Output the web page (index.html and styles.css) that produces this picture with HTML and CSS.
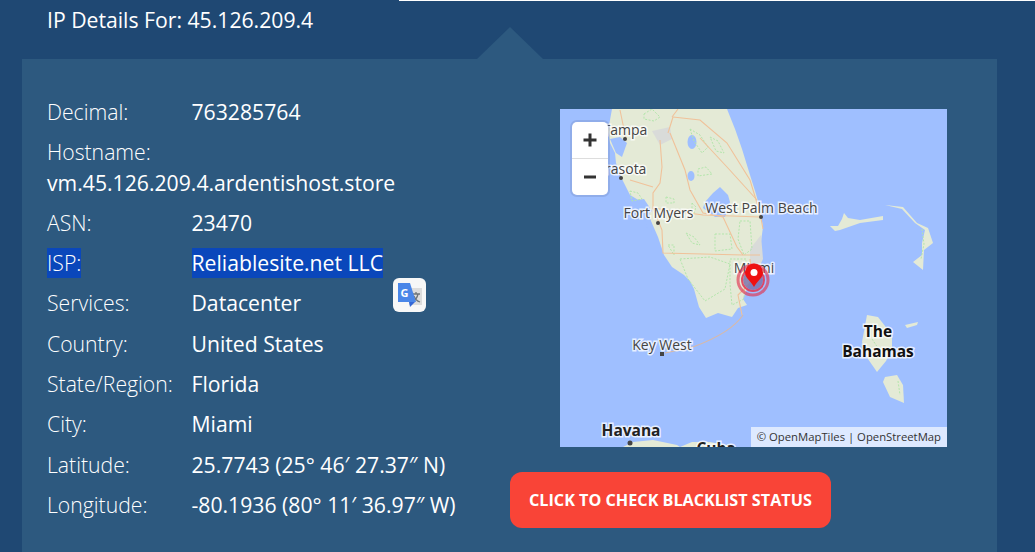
FILE: index.html
```html
<!DOCTYPE html>
<html lang="en">
<head>
  <meta charset="UTF-8">
  <meta name="viewport" content="width=device-width, initial-scale=1.0">
  <title>IP Details</title>
  <link rel="stylesheet" href="styles.css">
</head>
<body>

<div class="top-sliver"></div>

<h2 class="page-title">IP Details For: 45.126.209.4</h2>

<div class="card">
  <ul class="details">
    <li><span class="label">Decimal:</span>763285764</li>
    <li><span class="label">Hostname:</span> vm.45.126.209.4.ardentishost.store</li>
    <li><span class="label">ASN:</span>23470</li>
    <li><span class="label"><span class="picked">ISP:</span></span><span class="picked">Reliablesite.net LLC</span></li>
    <li><span class="label">Services:</span>Datacenter</li>
    <li><span class="label">Country:</span>United States</li>
    <li><span class="label">State/Region:</span>Florida</li>
    <li><span class="label">City:</span>Miami</li>
    <li><span class="label">Latitude:</span>25.7743 (25° 46′ 27.37″ N)</li>
    <li><span class="label">Longitude:</span>-80.1936 (80° 11′ 36.97″ W)</li>
  </ul>

  <div class="side">
    <div class="map">
      <svg class="map-art" viewBox="0 0 387 338" width="387" height="338">
        <g class="tiles">
          <!-- land -->
          <path class="land" d="M52,0 L50,11 48,22 50,34 55,44 56,54 62,70 70,86 80,92 87,98 91,112 98,128 104,146 112,158 124,166 130,172 134,180 139,198 146,209 158,204 172,208 178,199 187,196 183,190 190,172 196,160 200,140 203,118 200,100 196,85 190,66 182,40 175,20 167,0 Z"/>
          <path class="land" d="M265,112 L275,122 280,121 300,114 323,111 323,107 300,111 288,109 284,104 282,110 278,117 270,117 Z"/>
          <path class="land" d="M325,96 L343,98 357,114 368,119 373,134 364,141 363,161 353,153 362,146 362,134 365,121 355,114 342,100 Z"/>
          <path class="land" d="M307,206 L318,208 332,226 332,240 326,252 317,263 308,250 302,233 Z"/>
          <path class="land" d="M325,268 L337,266 343,276 344,294 330,288 323,273 Z"/>
          <path class="land" d="M345,216 L358,213 357,216 347,219 Z"/>
          <path class="land" d="M63,338 L73,333 93,331 117,336 120,338 Z"/>
          <path class="land" d="M120,338 L132,333 150,333 175,338 Z"/>
          <!-- water on land -->
          <path class="water" d="M145,93 L153,84 160,78 168,86 170,93 165,108 155,108 143,99 Z"/>
          <ellipse class="water" cx="132" cy="33" rx="4.500" ry="7"/>
          <ellipse class="water" cx="131" cy="67" rx="3.500" ry="5"/>
          <path class="water" d="M50,30 L60,28 67,34 62,48 56,44 Z"/>
          <path class="water" d="M76,91 L84,90 92,102 88,106 Z"/>
          <path class="water" d="M84,108 L91,112 92,124 88,122 Z"/>
          <!-- built up -->
          <path class="urban" d="M190,140 L201,126 203,150 196,165 190,160 Z"/>
          <path class="urban" d="M92,22 L110,18 112,30 100,36 Z"/>
          <!-- parks -->
          <path class="park" d="M84,5 L92,0 100,8 94,12 84,10 Z"/>
          <path class="park" d="M130,20 L140,26 148,38 142,44 134,32 Z"/>
          <path class="park" d="M150,28 L158,32 164,44 156,42 Z"/>
          <path class="park" d="M138,60 L146,58 152,65 138,67 Z"/>
          <path class="park" d="M70,82 L78,84 82,90 72,92 Z"/>
          <path class="park" d="M106,88 L114,90 114,94 106,94 Z"/>
          <path class="park" d="M132,94 L136,98 134,104 132,102 Z"/>
          <path class="park" d="M126,124 L134,128 140,136 132,134 Z"/>
          <path class="park" d="M108,136 L114,136 114,146 Z"/>
          <path class="park" d="M155,125 L170,125 172,140 155,142 Z"/>
          <path class="park" d="M180,112 L190,112 192,140 184,146 178,130 Z"/>
          <path class="park" d="M120,150 L150,148 170,155 165,180 145,192 128,170 Z"/>
          <path class="park" d="M170,150 L186,150 184,190 172,196 170,175 Z"/>
          <path class="park" d="M362,120 L364,135 361,150 M312,230 L322,245 M338,272 L340,286"/>
          <!-- roads -->
          <path class="road" d="M113,8 L140,11 167,34 190,71 200,104 203,120"/>
          <path class="road" d="M110,24 L125,61 130,81 143,104 163,108 177,138 183,146"/>
          <path class="road" d="M100,31 L102,58 100,74 93,84 93,99 143,106 200,108"/>
          <path class="road" d="M93,99 L102,121 103,144 183,146 200,146"/>
          <path class="road" d="M140,29 L167,58 197,91"/>
          <path class="road" d="M60,1 L66,30 M70,71 L93,78 M112,8 L118,0 M113,8 L108,24"/>
          <path class="road" d="M190,150 L192,172 178,186 182,206"/>
          <path class="road thin" d="M183,206 C175,218 160,228 133,238 L105,244"/>
        </g>
        <!-- labels -->
        <text class="place" x="65" y="26" text-anchor="middle">Tampa</text>
        <text class="place" x="58" y="65" text-anchor="middle">Sarasota</text>
        <text class="place" x="98.500" y="109" text-anchor="middle">Fort Myers</text>
        <text class="place" x="201.500" y="104" text-anchor="middle">West Palm Beach</text>
        <text class="place" x="194" y="164" text-anchor="middle">Miami</text>
        <text class="place" x="102" y="241" text-anchor="middle">Key West</text>
        <text class="place big" x="71" y="327" text-anchor="middle">Havana</text>
        <text class="place big" x="156" y="345" text-anchor="middle">Cuba</text>
        <text class="place big dark" x="318" y="228" text-anchor="middle">The</text>
        <text class="place big dark" x="318" y="248" text-anchor="middle">Bahamas</text>
        <circle class="dot" cx="65" cy="30" r="2"/>
        <circle class="dot" cx="61" cy="69" r="2"/>
        <circle class="dot" cx="98" cy="114" r="2"/>
        <circle class="dot" cx="201" cy="108" r="2"/>
        <rect class="dot" x="100" y="243" width="4" height="4"/>
        <circle class="dot" cx="70" cy="334" r="2.500"/>
        <!-- marker -->
        <circle class="pulse-core" cx="193" cy="171" r="10"/>
        <circle class="pulse-ring" cx="193" cy="171" r="15"/>
        <circle class="pulse-ring inner" cx="193" cy="171" r="11"/>
        <path class="pin" d="M194,178 C191,172 185,169 185,163.500 A9,9 0 0 1 203,163.500 C203,169 197,172 194,178 Z"/>
        <circle class="pin-hole" cx="194" cy="163.500" r="3.500"/>
      </svg>

      <div class="zoom-box">
        <div class="zoom-btn"><svg viewBox="0 0 16 16" width="16" height="16"><path class="zoom-mark" d="M8,1.500 V14.500 M1.500,8 H14.500"/></svg></div>
        <div class="zoom-btn"><svg viewBox="0 0 16 16" width="16" height="16"><path class="zoom-mark" d="M2,8 H14"/></svg></div>
      </div>

      <div class="attribution">© OpenMapTiles | OpenStreetMap</div>
    </div>

    <a class="check-btn" href="#">CLICK TO CHECK BLACKLIST STATUS</a>
  </div>

  <div class="translate-pop">
    <svg viewBox="0 0 26 26" width="26" height="26">
      <rect x="12" y="6" width="13" height="17" fill="#dcdcdc"/>
      <path d="M15,12 H23 M19,10 V12 M21,12 C20,17 17,19 15,20 M17,14 C18,17 20,19 23,20" stroke="#6d7478" stroke-width="1.300" fill="none"/>
      <path d="M1,1 H13 L19,20 H1 Z" fill="#4a86e8"/>
      <path d="M12,20 H18 L13,25 Z" fill="#3367d6"/>
      <text class="translate-g" x="7.500" y="15" text-anchor="middle">G</text>
    </svg>
  </div>
</div>

</body>
</html>
```

FILE: styles.css
```css
html, body {
  height: 100%;
}

body {
  font-family: 'Open Sans', sans-serif;
  background-color: #1f4873;
  color: white;
  margin: 0;
  overflow: hidden;
  display: flex;
  flex-direction: column;
}

.top-sliver {
  position: absolute;
  top: 0;
  left: 399px;
  right: 0;
  height: 1px;
  background: white;
}

.page-title {
  margin: 0;
  padding: 5px 47px 24px;
  font-size: 21.200px;
  font-weight: 400;
  line-height: 30px;
}

.card {
  position: relative;
  flex: 1;
  margin: 0 38px 0 22px;
  padding: 38px 25px 0;
  background: #2d597f;
  display: flex;
}

.card::before {
  content: "";
  position: absolute;
  top: -32px;
  left: 455px;
  width: 66px;
  height: 32px;
  background: #2d597f;
  clip-path: polygon(50% 0, 100% 100%, 0 100%);
}

.details {
  list-style: none;
  margin: 0;
  padding: 0;
  width: 463px;
  flex-shrink: 0;
  font-size: 21.200px;
  font-weight: 400;
  line-height: 30.300px;
}

.details li {
  margin-bottom: 10px;
}

.label {
  display: inline-block;
  width: 144.500px;
  font-weight: 300;
}

.picked {
  display: inline-block;
  background: #0a47bb;
  line-height: 30px;
}

.side {
  display: flex;
  flex-direction: column;
  align-items: flex-start;
  margin-top: 12px;
}

.map {
  position: relative;
  width: 387px;
  height: 338px;
  margin-left: 50px;
  background: #9fbfff;
  overflow: hidden;
}

.map-art {
  display: block;
}

.tiles {
  filter: blur(0.4px);
}

.land {
  fill: #e4ead6;
}

.water {
  fill: #9fbfff;
}

.urban {
  fill: #d9dbd9;
}

.park {
  fill: none;
  stroke: #b3e6ab;
  stroke-width: 1;
  stroke-dasharray: 2 1.500;
}

.road {
  fill: none;
  stroke: #f0c29a;
  stroke-width: 1.100;
}

.road.thin {
  stroke: #d9b9a6;
}

.place {
  font-family: 'Open Sans', sans-serif;
  font-size: 14px;
  fill: #444;
  stroke: rgba(255, 255, 255, 0.75);
  stroke-width: 3px;
  paint-order: stroke;
}

.place.big {
  font-size: 15.500px;
  font-weight: 700;
  fill: #222;
}

.place.dark {
  fill: #111;
}

.dot {
  fill: #444;
}

.pulse-core {
  fill: rgba(120, 110, 170, 0.8);
}

.pulse-ring {
  fill: none;
  stroke: rgba(226, 50, 80, 0.65);
  stroke-width: 3;
}

.pulse-ring.inner {
  stroke: rgba(226, 50, 80, 0.85);
  stroke-width: 2;
}

.pin {
  fill: #ee1111;
}

.pin-hole {
  fill: white;
}

.zoom-box {
  position: absolute;
  top: 13px;
  left: 12px;
  width: 36px;
  background: white;
  border-radius: 5px;
  box-shadow: 0 0 0 2px rgba(100, 120, 170, 0.25);
}

.zoom-btn {
  height: 36px;
  display: flex;
  align-items: center;
  justify-content: center;
}

.zoom-btn + .zoom-btn {
  border-top: 1px solid #ddd;
}

.zoom-mark {
  fill: none;
  stroke: #333;
  stroke-width: 3;
}

.attribution {
  position: absolute;
  right: 0;
  bottom: 0;
  padding: 0 6px;
  height: 20px;
  line-height: 20px;
  font-size: 11.300px;
  color: #333;
  background: rgba(255, 255, 255, 0.65);
}

.check-btn {
  margin-top: 25px;
  padding: 0 19px;
  height: 56px;
  line-height: 56px;
  background: #f94437;
  border-radius: 12px;
  color: white;
  font-size: 16.200px;
  font-weight: 700;
  text-decoration: none;
}

.translate-pop {
  position: absolute;
  top: 219px;
  left: 371px;
  width: 33px;
  height: 34px;
  background: #f7f7f7;
  border-radius: 6px;
  display: flex;
  align-items: center;
  justify-content: center;
}

.translate-g {
  font-family: 'Open Sans', sans-serif;
  font-size: 11px;
  font-weight: 700;
  fill: white;
}
```
